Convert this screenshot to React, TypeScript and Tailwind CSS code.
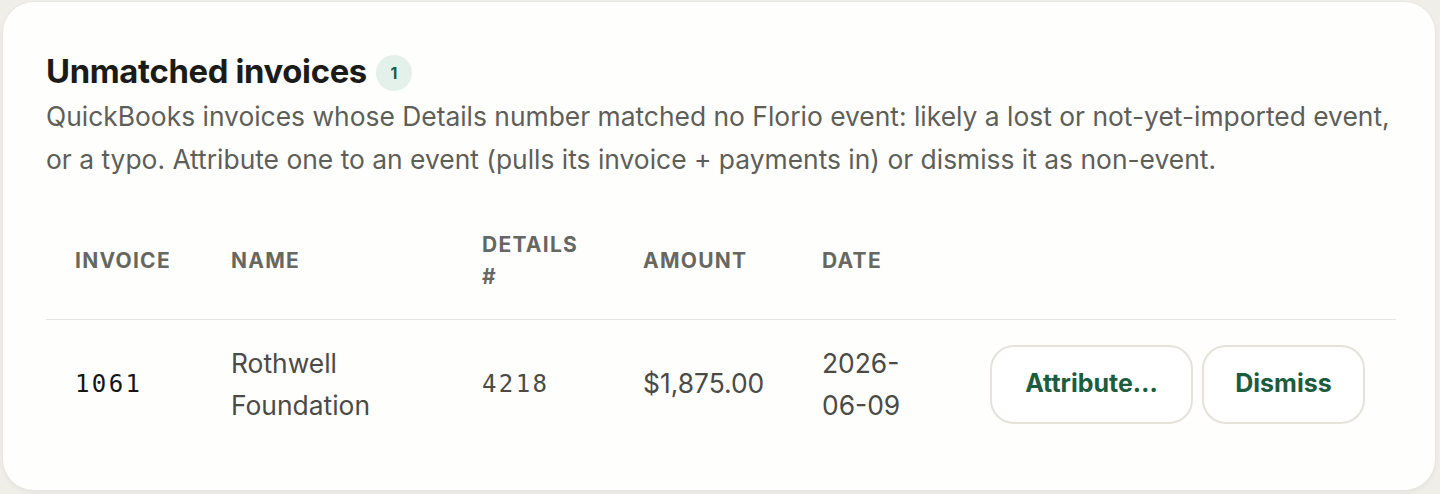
const rows = [
  { invoice: '1061', name: ['Rothwell', 'Foundation'], details: '4218', amount: '$1,875.00', date: ['2026-', '06-09'] },
]

const headers = [
  { label: ['INVOICE'], width: 'w-[156px]' },
  { label: ['NAME'], width: 'w-[251px]' },
  { label: ['DETAILS', '#'], width: 'w-[161px]' },
  { label: ['AMOUNT'], width: 'w-[179px]' },
  { label: ['DATE'], width: 'w-[169px]' },
  { label: [], width: '' },
]

export default function App() {
  return (
    <div className="h-[494px] w-[1440px] overflow-hidden bg-[#efeee9] pl-[2px] pt-[1px]" style={{ fontFamily: 'Inter, "Noto Sans", sans-serif' }}>
      <section className="h-[490px] w-[1434px] rounded-[32px] border border-[#e9e7e1] bg-[#fefefd] pl-[43px] pr-[40px] pt-[49px] shadow-[0_2px_4px_rgba(0,0,0,0.04)]">
        <div className="flex items-center gap-[9px]">
          <h2 className="text-[32.8px] font-bold leading-[40px] tracking-[-0.01em] text-[#1b1b19]">Unmatched invoices</h2>
          <span className="mt-[4px] flex h-[36px] w-[36px] items-center justify-center rounded-full bg-[#e4f1ea] text-[16px] font-bold text-[#1d5c40]">
            1
          </span>
        </div>
        <p className="mt-[4px] w-[1352px] text-[26.4px] leading-[43px] text-[#5e5e59]">
          QuickBooks invoices whose Details number matched no Florio event: likely a lost or not-yet-imported event,
          or a typo. Attribute one to an event (pulls its invoice + payments in) or dismiss it as non-event.
        </p>

        <table className="mt-[48px] w-[1350px] table-fixed border-collapse text-left">
          <thead>
            <tr className="border-b border-[#e6e5e0]">
              {headers.map((h, i) => (
                <th
                  key={i}
                  className={`${h.width} pb-[26px] pl-[29px] pr-[4px] align-middle text-[21px] font-bold uppercase leading-[32px] tracking-[0.06em] text-[#676762]`}
                >
                  {h.label.map((l, j) => (
                    <div key={j}>{l}</div>
                  ))}
                </th>
              ))}
            </tr>
          </thead>
          <tbody>
            {rows.map((r) => (
              <tr key={r.invoice}>
                <td className="py-[22px] pl-[29px] align-middle font-['DejaVu_Sans_Mono',monospace] text-[24px] tracking-[0.1em] text-[#151515]">
                  {r.invoice}
                </td>
                <td className="py-[22px] pl-[29px] align-middle text-[26.4px] leading-[42px] text-[#4a4a46]">
                  {r.name.map((n) => (
                    <div key={n}>{n}</div>
                  ))}
                </td>
                <td className="py-[22px] pl-[29px] align-middle font-['DejaVu_Sans_Mono',monospace] text-[24px] tracking-[0.1em] text-[#4a4a46]">
                  {r.details}
                </td>
                <td className="whitespace-nowrap py-[22px] pl-[29px] align-middle text-[26.4px] text-[#4a4a46]">{r.amount}</td>
                <td className="py-[22px] pl-[29px] align-middle text-[26.4px] leading-[42px] text-[#4a4a46]">
                  {r.date.map((d) => (
                    <div key={d}>{d}</div>
                  ))}
                </td>
                <td className="py-[22px] pl-[28px] align-middle">
                  <div className="flex gap-[9px]">
                    <button className="h-[79px] w-[203px] rounded-[24px] border-2 border-[#e4e2da] bg-white text-[25px] font-bold text-[#1c5c3f]">
                      Attribute…
                    </button>
                    <button className="h-[79px] w-[163px] rounded-[24px] border-2 border-[#e4e2da] bg-white text-[25px] font-bold text-[#1c5c3f]">
                      Dismiss
                    </button>
                  </div>
                </td>
              </tr>
            ))}
          </tbody>
        </table>
      </section>
    </div>
  )
}
